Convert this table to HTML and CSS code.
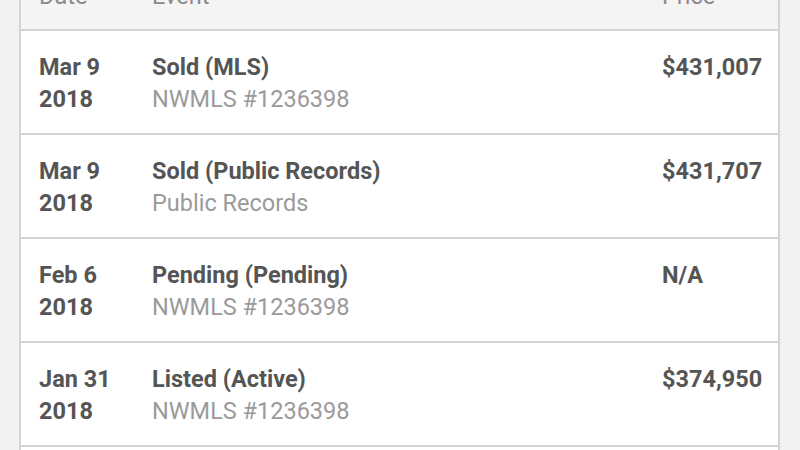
FILE: index.html
```html
<!DOCTYPE html>
<html lang="en">
<head>
<meta charset="utf-8">
<title>Price history</title>
<link rel="stylesheet" href="styles.css">
</head>
<body>
<div class="card">
  <div class="row head">
    <div>Date</div>
    <div>Event</div>
    <div>Price</div>
  </div>
  <div class="row">
    <div class="date">Mar 9<br>2018</div>
    <div><div class="event">Sold (MLS)</div><div class="sub">NWMLS #1236398</div></div>
    <div class="price">$431,007</div>
  </div>
  <div class="row">
    <div class="date">Mar 9<br>2018</div>
    <div><div class="event">Sold (Public Records)</div><div class="sub">Public Records</div></div>
    <div class="price">$431,707</div>
  </div>
  <div class="row">
    <div class="date">Feb 6<br>2018</div>
    <div><div class="event">Pending (Pending)</div><div class="sub">NWMLS #1236398</div></div>
    <div class="price">N/A</div>
  </div>
  <div class="row">
    <div class="date">Jan 31<br>2018</div>
    <div><div class="event">Listed (Active)</div><div class="sub">NWMLS #1236398</div></div>
    <div class="price">$374,950</div>
  </div>
  <div class="row">
    <div class="date">Jan 12<br>2018</div>
    <div><div class="event">Listed (Coming Soon)</div><div class="sub">NWMLS #1236398</div></div>
    <div class="price">$374,950</div>
  </div>
</div>
</body>
</html>
```
FILE: styles.css
```css
html, body {
  margin: 0;
  padding: 0;
  background: #f2f2f2;
  overflow: hidden;
}
body {
  font-family: Roboto, "Liberation Sans", sans-serif;
  font-size: 23.5px;
  line-height: 31.5px;
}
.card {
  margin: -34px 20px 0 19px;
  border: 2px solid #d3d3d3;
  background: #ffffff;
}
.row {
  display: grid;
  grid-template-columns: 113px 510px 1fr;
  padding: 21px 18px 18px;
  border-top: 2px solid #d3d3d3;
}
.row.head {
  border-top: 0;
  background: #f4f4f4;
  color: #8a8a8a;
  padding: 14px 18px 19px;
  line-height: 28px;
}
.date, .event, .price {
  font-weight: 700;
  color: #555555;
}
.sub {
  color: #9a9a9a;
}
```
